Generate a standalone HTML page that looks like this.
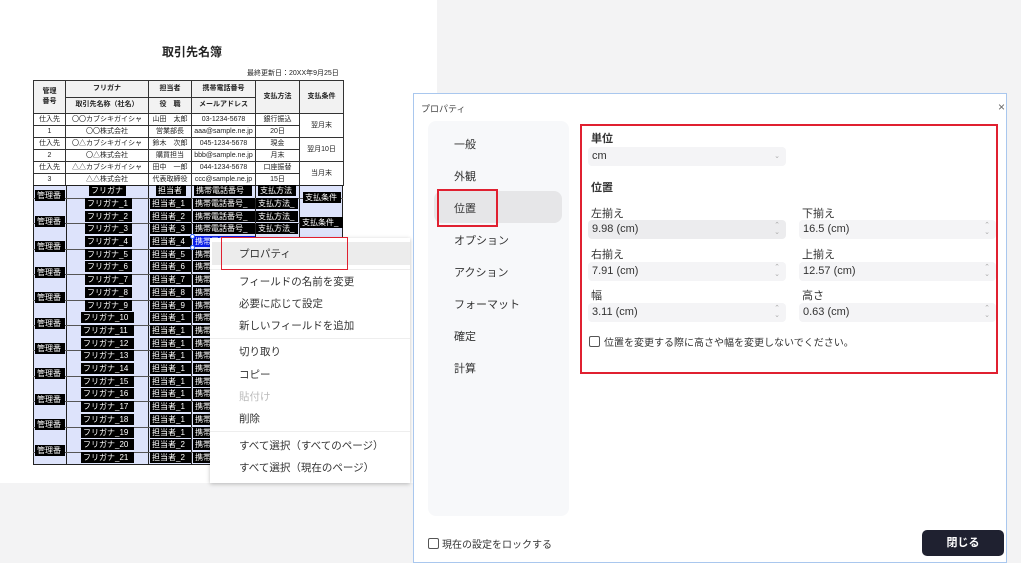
<!DOCTYPE html>
<html><head><meta charset="utf-8"><style>
*{margin:0;padding:0;box-sizing:border-box}
body{width:1021px;height:560px;overflow:hidden;background:#f3f3f4;font-family:"Liberation Sans","Noto Sans CJK JP",sans-serif;position:relative;color:#222}
.a{position:absolute}
#page{left:0;top:0;width:437px;height:483px;background:#fff}
table{border-collapse:collapse;position:absolute;left:33px;top:80px;table-layout:fixed}
td{border:1px solid #333;font-size:7px;text-align:center;height:12px;line-height:10px;padding:0;white-space:nowrap;overflow:hidden}
.h td{height:16.5px;background:#f2f2f2;font-weight:bold;font-size:7px}
.fa{left:33px;top:185px;width:310px;height:280px;background:#dde3fb;border:1px solid #222}
.vl{top:185px;width:1px;height:280px;background:#222}
.hl{left:33px;width:310px;height:1px;background:#555}
.f{background:#000;color:#fff;font-size:8px;line-height:11px;height:11px;white-space:nowrap;overflow:hidden;padding-left:2px}
.menu{left:210px;top:238px;width:200px;height:245px;background:#fff;box-shadow:0 1px 4px rgba(0,0,0,.25)}
.mi{position:absolute;left:29px;font-size:10.5px;color:#333}
.sep{position:absolute;left:0;width:200px;height:1px;background:#eee}
#dlg{left:413px;top:93px;width:594px;height:470px;background:#fff;border:1px solid #a9c7ee}
.nav{position:absolute;font-size:11px;color:#333;left:40px}
.lbl{position:absolute;font-size:11px;color:#333}
.inp{position:absolute;height:19px;background:#f4f4f6;border-radius:4px;font-size:11px;line-height:19px;padding-left:4px;color:#333}
.sp{position:absolute;right:6px;top:2px;font-size:7px;line-height:7px;color:#aaa}
</style></head><body>
<div class="a" id="page"></div>
<div class="a" style="left:162px;top:43px;font-size:12px;font-weight:bold">取引先名簿</div>
<div class="a" style="left:247px;top:68px;font-size:7px">最終更新日：20XX年9月25日</div>
<table>
<colgroup><col style="width:32px"><col style="width:83px"><col style="width:43px"><col style="width:64px"><col style="width:44px"><col style="width:44px"></colgroup>
<tr class="h"><td rowspan="2">管理<br>番号</td><td>フリガナ</td><td>担当者</td><td>携帯電話番号</td><td rowspan="2">支払方法</td><td rowspan="2">支払条件</td></tr>
<tr class="h"><td>取引先名称（社名）</td><td>役　職</td><td>メールアドレス</td></tr>
<tr><td>仕入先</td><td>〇〇カブシキガイシャ</td><td>山田　太郎</td><td>03-1234-5678</td><td>銀行振込</td><td rowspan="2">翌月末</td></tr>
<tr><td>1</td><td>〇〇株式会社</td><td>営業部長</td><td>aaa@sample.ne.jp</td><td>20日</td></tr>
<tr><td>仕入先</td><td>〇△カブシキガイシャ</td><td>鈴木　次郎</td><td>045-1234-5678</td><td>現金</td><td rowspan="2">翌月10日</td></tr>
<tr><td>2</td><td>〇△株式会社</td><td>購買担当</td><td>bbb@sample.ne.jp</td><td>月末</td></tr>
<tr><td>仕入先</td><td>△△カブシキガイシャ</td><td>田中　一郎</td><td>044-1234-5678</td><td>口座振替</td><td rowspan="2">当月末</td></tr>
<tr><td>3</td><td>△△株式会社</td><td>代表取締役</td><td>ccc@sample.ne.jp</td><td>15日</td></tr>
</table>
<div class="a fa"></div>
<div class="a vl" style="left:66px"></div><div class="a vl" style="left:148px"></div><div class="a vl" style="left:191px"></div><div class="a vl" style="left:255px"></div><div class="a vl" style="left:299px"></div>
<div class="a hl" style="top:198px"></div><div class="a hl" style="top:223px"></div><div class="a hl" style="top:249px"></div><div class="a hl" style="top:274px"></div><div class="a hl" style="top:300px"></div><div class="a hl" style="top:325px"></div><div class="a hl" style="top:350px"></div><div class="a hl" style="top:376px"></div><div class="a hl" style="top:401px"></div><div class="a hl" style="top:427px"></div><div class="a hl" style="top:452px"></div>
<div class="a f" style="left:35px;top:190px;width:30px">管理番</div>
<div class="a f" style="left:35px;top:216px;width:30px">管理番</div>
<div class="a f" style="left:35px;top:241px;width:30px">管理番</div>
<div class="a f" style="left:35px;top:267px;width:30px">管理番</div>
<div class="a f" style="left:35px;top:292px;width:30px">管理番</div>
<div class="a f" style="left:35px;top:318px;width:30px">管理番</div>
<div class="a f" style="left:35px;top:343px;width:30px">管理番</div>
<div class="a f" style="left:35px;top:368px;width:30px">管理番</div>
<div class="a f" style="left:35px;top:394px;width:30px">管理番</div>
<div class="a f" style="left:35px;top:419px;width:30px">管理番</div>
<div class="a f" style="left:35px;top:445px;width:30px">管理番</div>
<div class="a f" style="left:89px;top:185px;width:37px">フリガナ</div>
<div class="a f" style="left:85px;top:198px;width:47px">フリガナ_1</div>
<div class="a f" style="left:85px;top:211px;width:47px">フリガナ_2</div>
<div class="a f" style="left:85px;top:223px;width:47px">フリガナ_3</div>
<div class="a f" style="left:85px;top:236px;width:47px">フリガナ_4</div>
<div class="a f" style="left:85px;top:249px;width:47px">フリガナ_5</div>
<div class="a f" style="left:85px;top:261px;width:47px">フリガナ_6</div>
<div class="a f" style="left:85px;top:274px;width:47px">フリガナ_7</div>
<div class="a f" style="left:85px;top:287px;width:47px">フリガナ_8</div>
<div class="a f" style="left:85px;top:300px;width:47px">フリガナ_9</div>
<div class="a f" style="left:81px;top:312px;width:53px">フリガナ_10</div>
<div class="a f" style="left:81px;top:325px;width:53px">フリガナ_11</div>
<div class="a f" style="left:81px;top:338px;width:53px">フリガナ_12</div>
<div class="a f" style="left:81px;top:350px;width:53px">フリガナ_13</div>
<div class="a f" style="left:81px;top:363px;width:53px">フリガナ_14</div>
<div class="a f" style="left:81px;top:376px;width:53px">フリガナ_15</div>
<div class="a f" style="left:81px;top:388px;width:53px">フリガナ_16</div>
<div class="a f" style="left:81px;top:401px;width:53px">フリガナ_17</div>
<div class="a f" style="left:81px;top:414px;width:53px">フリガナ_18</div>
<div class="a f" style="left:81px;top:427px;width:53px">フリガナ_19</div>
<div class="a f" style="left:81px;top:439px;width:53px">フリガナ_20</div>
<div class="a f" style="left:81px;top:452px;width:53px">フリガナ_21</div>
<div class="a f" style="left:156px;top:185px;width:30px">担当者</div>
<div class="a f" style="left:150px;top:198px;width:41px">担当者_1</div>
<div class="a f" style="left:150px;top:211px;width:41px">担当者_2</div>
<div class="a f" style="left:150px;top:223px;width:41px">担当者_3</div>
<div class="a f" style="left:150px;top:236px;width:41px">担当者_4</div>
<div class="a f" style="left:150px;top:249px;width:41px">担当者_5</div>
<div class="a f" style="left:150px;top:261px;width:41px">担当者_6</div>
<div class="a f" style="left:150px;top:274px;width:41px">担当者_7</div>
<div class="a f" style="left:150px;top:287px;width:41px">担当者_8</div>
<div class="a f" style="left:150px;top:300px;width:41px">担当者_9</div>
<div class="a f" style="left:150px;top:312px;width:41px">担当者_1</div>
<div class="a f" style="left:150px;top:325px;width:41px">担当者_1</div>
<div class="a f" style="left:150px;top:338px;width:41px">担当者_1</div>
<div class="a f" style="left:150px;top:350px;width:41px">担当者_1</div>
<div class="a f" style="left:150px;top:363px;width:41px">担当者_1</div>
<div class="a f" style="left:150px;top:376px;width:41px">担当者_1</div>
<div class="a f" style="left:150px;top:388px;width:41px">担当者_1</div>
<div class="a f" style="left:150px;top:401px;width:41px">担当者_1</div>
<div class="a f" style="left:150px;top:414px;width:41px">担当者_1</div>
<div class="a f" style="left:150px;top:427px;width:41px">担当者_1</div>
<div class="a f" style="left:150px;top:439px;width:41px">担当者_2</div>
<div class="a f" style="left:150px;top:452px;width:41px">担当者_2</div>
<div class="a f" style="left:194px;top:185px;width:58px">携帯電話番号</div>
<div class="a f" style="left:193px;top:198px;width:62px">携帯電話番号_</div>
<div class="a f" style="left:193px;top:211px;width:62px">携帯電話番号_</div>
<div class="a f" style="left:193px;top:223px;width:62px">携帯電話番号_</div>
<div class="a f" style="left:193px;top:236px;width:62px;background:#0a1ee8">携帯電話番号_</div>
<div class="a f" style="left:193px;top:249px;width:62px">携帯</div>
<div class="a f" style="left:193px;top:261px;width:62px">携帯</div>
<div class="a f" style="left:193px;top:274px;width:62px">携帯</div>
<div class="a f" style="left:193px;top:287px;width:62px">携帯</div>
<div class="a f" style="left:193px;top:300px;width:62px">携帯</div>
<div class="a f" style="left:193px;top:312px;width:62px">携帯</div>
<div class="a f" style="left:193px;top:325px;width:62px">携帯</div>
<div class="a f" style="left:193px;top:338px;width:62px">携帯</div>
<div class="a f" style="left:193px;top:350px;width:62px">携帯</div>
<div class="a f" style="left:193px;top:363px;width:62px">携帯</div>
<div class="a f" style="left:193px;top:376px;width:62px">携帯</div>
<div class="a f" style="left:193px;top:388px;width:62px">携帯</div>
<div class="a f" style="left:193px;top:401px;width:62px">携帯</div>
<div class="a f" style="left:193px;top:414px;width:62px">携帯</div>
<div class="a f" style="left:193px;top:427px;width:62px">携帯</div>
<div class="a f" style="left:193px;top:439px;width:62px">携帯</div>
<div class="a f" style="left:193px;top:452px;width:62px">携帯</div>
<div class="a" style="left:190px;top:234px;width:5px;height:5px;border-radius:50%;background:#fff;border:1px solid #36f"></div>
<div class="a" style="left:190px;top:245px;width:5px;height:5px;border-radius:50%;background:#fff;border:1px solid #36f"></div>
<div class="a f" style="left:258px;top:185px;width:38px">支払方法</div>
<div class="a f" style="left:256px;top:198px;width:42px">支払方法_</div>
<div class="a f" style="left:256px;top:211px;width:42px">支払方法_</div>
<div class="a f" style="left:256px;top:223px;width:42px">支払方法_</div>
<div class="a f" style="left:303px;top:192px;width:38px">支払条件</div>
<div class="a f" style="left:300px;top:217px;width:43px">支払条件_</div>
<div class="a menu">
<div class="a" style="left:2px;top:4px;width:198px;height:23px;background:#ececec"></div>
<div class="mi" style="top:8px">プロパティ</div>
<div class="sep" style="top:31px"></div>
<div class="mi" style="top:36px">フィールドの名前を変更</div>
<div class="mi" style="top:58px">必要に応じて設定</div>
<div class="mi" style="top:80px">新しいフィールドを追加</div>
<div class="sep" style="top:100px"></div>
<div class="mi" style="top:106px">切り取り</div>
<div class="mi" style="top:129px">コピー</div>
<div class="mi" style="top:151px;color:#bbb">貼付け</div>
<div class="mi" style="top:173px">削除</div>
<div class="sep" style="top:193px"></div>
<div class="mi" style="top:200px">すべて選択（すべてのページ）</div>
<div class="mi" style="top:222px">すべて選択（現在のページ）</div>
</div>
<div class="a" style="left:221px;top:237px;width:127px;height:33px;border:1.5px solid #e02030"></div>
<div class="a" id="dlg">
<div class="a" style="left:7px;top:8px;font-size:9px;color:#444">プロパティ</div>
<div class="a" style="left:584px;top:6px;font-size:12px;color:#666">×</div>
<div class="a" style="left:14px;top:27px;width:141px;height:395px;background:#f7f8fa;border-radius:8px"></div>
<div class="a" style="left:20px;top:97px;width:128px;height:32px;background:#e6e6e8;border-radius:8px"></div>
<div class="nav" style="top:42px">一般</div>
<div class="nav" style="top:74px">外観</div>
<div class="nav" style="top:106px">位置</div>
<div class="nav" style="top:138px">オプション</div>
<div class="nav" style="top:170px">アクション</div>
<div class="nav" style="top:202px">フォーマット</div>
<div class="nav" style="top:234px">確定</div>
<div class="nav" style="top:266px">計算</div>
<div class="a" style="left:23px;top:95px;width:61px;height:38px;border:2px solid #e02030"></div>
<div class="a" style="left:166px;top:30px;width:418px;height:250px;border:2px solid #e02030"></div>
<div class="lbl" style="left:177px;top:36px;font-weight:bold">単位</div>
<div class="inp" style="left:174px;top:53px;width:198px">cm<span class="sp" style="top:6px">⌄</span></div>
<div class="lbl" style="left:177px;top:85px;font-weight:bold">位置</div>
<div class="lbl" style="left:177px;top:111px">左揃え</div>
<div class="inp" style="left:174px;top:126px;width:198px;background:#ececee">9.98 (cm)<span class="sp">⌃<br>⌄</span></div>
<div class="lbl" style="left:177px;top:152px">右揃え</div>
<div class="inp" style="left:174px;top:168px;width:198px">7.91 (cm)<span class="sp">⌃<br>⌄</span></div>
<div class="lbl" style="left:177px;top:193px">幅</div>
<div class="inp" style="left:174px;top:209px;width:198px">3.11 (cm)<span class="sp">⌃<br>⌄</span></div>
<div class="lbl" style="left:388px;top:111px">下揃え</div>
<div class="inp" style="left:385px;top:126px;width:197px">16.5 (cm)<span class="sp">⌃<br>⌄</span></div>
<div class="lbl" style="left:388px;top:152px">上揃え</div>
<div class="inp" style="left:385px;top:168px;width:197px">12.57 (cm)<span class="sp">⌃<br>⌄</span></div>
<div class="lbl" style="left:388px;top:193px">高さ</div>
<div class="inp" style="left:385px;top:209px;width:197px">0.63 (cm)<span class="sp">⌃<br>⌄</span></div>
<div class="a" style="left:175px;top:242px;width:11px;height:11px;border:1px solid #555;border-radius:2px"></div>
<div class="lbl" style="left:190px;top:240px;font-size:10px">位置を変更する際に高さや幅を変更しないでください。</div>
<div class="a" style="left:14px;top:444px;width:11px;height:11px;border:1px solid #555;border-radius:2px"></div>
<div class="lbl" style="left:28px;top:442px;font-size:10px">現在の設定をロックする</div>
<div class="a" style="left:508px;top:436px;width:82px;height:26px;background:#1f2130;border-radius:5px;color:#fff;font-size:11px;font-weight:bold;text-align:center;line-height:26px">閉じる</div>
</div>
</body></html>
